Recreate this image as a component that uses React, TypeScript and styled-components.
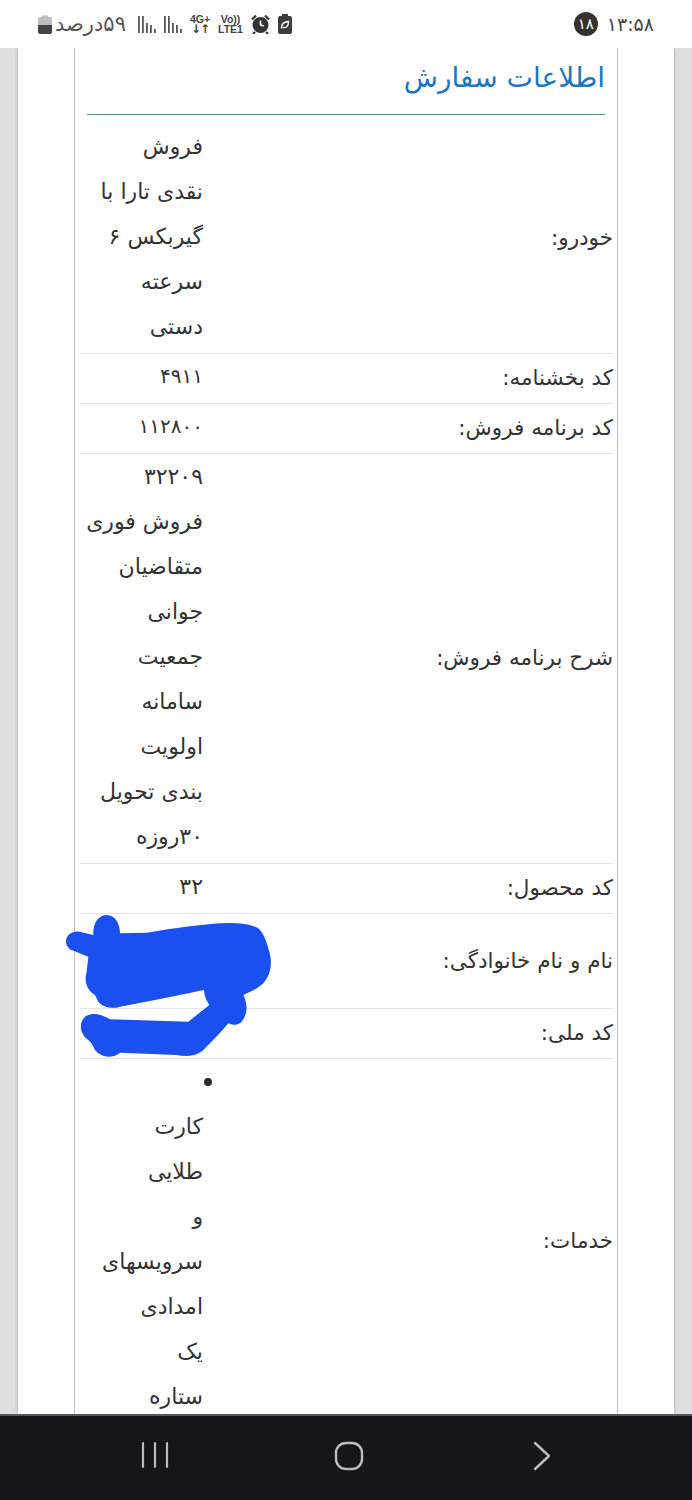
import React from "react";
import styled, { createGlobalStyle } from "styled-components";

const Global = createGlobalStyle`
  html, body { margin: 0; padding: 0; background: #fff; }
  * { box-sizing: border-box; }
`;

const Screen = styled.div`
  position: relative;
  width: 692px;
  height: 1500px;
  display: flex;
  flex-direction: column;
  overflow: hidden;
  font-family: "DejaVu Sans", "Noto Sans", sans-serif;
  color: #333;
`;

const StatusBar = styled.header`
  height: 48px;
  flex: none;
  background: #fff;
  display: flex;
  align-items: center;
  justify-content: space-between;
  padding: 0 38px;
  color: #4a4a4a;
`;

const StatusGroup = styled.div<{ $gap: number }>`
  display: flex;
  align-items: center;
  gap: ${(p) => p.$gap}px;
`;

const BatteryText = styled.span`
  font-size: 21px;
  line-height: 20px;
  color: #555;
  margin-left: 3px;
  margin-right: 12px;
`;

const ClockText = styled.span`
  font-size: 19px;
  line-height: 20px;
  color: #444;
`;

const Badge = styled.span`
  width: 24px;
  height: 24px;
  border-radius: 50%;
  background: #333;
  color: #fff;
  font-size: 15px;
  display: flex;
  align-items: center;
  justify-content: center;
`;

const NetStack = styled.span`
  display: flex;
  flex-direction: column;
  align-items: center;
  font-family: "Liberation Sans", sans-serif;
  font-weight: 700;
  font-size: 10.5px;
  line-height: 10px;
  color: #444;
`;

const NetArrows = styled.span`
  font-family: "DejaVu Sans", sans-serif;
  font-size: 12px;
  line-height: 10px;
  letter-spacing: -1px;
`;

const Viewport = styled.main`
  flex: 1;
  min-height: 0;
  overflow: hidden;
  padding: 0 18px;
  background: #dedede;
`;

const Sheet = styled.div`
  background: #fff;
  padding: 0 56px;
  box-shadow: 0 0 3px rgba(0, 0, 0, 0.3);
  height: 100%;
`;

const Card = styled.section`
  border-left: 1px solid #bdbdbd;
  border-right: 1px solid #bdbdbd;
  padding: 0 4px 0 5px;
  height: 100%;
`;

const HeadingBlock = styled.div`
  height: 67px;
  margin: 0 8px 0 7px;
  border-bottom: 1px solid #5b8a92;
  padding-top: 8px;
`;

const Heading = styled.h2`
  margin: 0;
  font-weight: 400;
  font-size: 28px;
  line-height: 44px;
  color: #1c76c4;
  text-align: right;
`;

const Rows = styled.div`
  margin-top: 9px;
`;

const Row = styled.div`
  display: grid;
  grid-template-columns: 1fr 125px;
  align-items: center;
  padding-bottom: 4px;
  & + & {
    border-top: 1px solid #e4e4e4;
  }
`;

const Label = styled.div`
  font-size: 21.5px;
  line-height: 30px;
  color: #333;
  white-space: nowrap;
  padding-top: 3px;
`;

const Value = styled.div`
  padding-right: 2px;
  text-align: right;
  font-size: 22px;
  color: #333;
`;

const Line = styled.div<{ $small?: boolean }>`
  height: 45px;
  line-height: 45px;
  white-space: nowrap;
  font-size: ${(p) => (p.$small ? "20px" : "inherit")};
`;

const BulletDot = styled.div`
  height: 45px;
  display: flex;
  align-items: center;
  justify-content: flex-start;
  margin-right: -9px;
  &::before {
    content: "";
    width: 8px;
    height: 8px;
    border-radius: 50%;
    background: #2b2b2b;
  }
`;

const NavBar = styled.nav`
  height: 86px;
  flex: none;
  background: #14161a;
  border-top: 2px solid #55575a;
  display: flex;
  align-items: flex-start;
  padding: 0 53px 0 58px;
  position: relative;
  z-index: 2;
`;

const NavSlot = styled.div`
  flex: 1;
  display: flex;
  justify-content: center;
  padding-top: 25px;
`;

const ScribbleLayer = styled.svg`
  position: absolute;
  left: 0;
  top: 900px;
  width: 350px;
  height: 200px;
`;

type RowData = { label: string; lines: string[]; bullet?: boolean; small?: boolean };

const rows: RowData[] = [
  { label: "خودرو:", lines: ["فروش", "نقدی تارا با", "گیربکس ۶", "سرعته", "دستی"] },
  { label: "کد بخشنامه:", lines: ["۴۹۱۱"], small: true },
  { label: "کد برنامه فروش:", lines: ["۱۱۲۸۰۰"], small: true },
  {
    label: "شرح برنامه فروش:",
    lines: ["۳۲۲۰۹", "فروش فوری", "متقاضیان", "جوانی", "جمعیت", "سامانه", "اولویت", "بندی تحویل", "۳۰روزه"],
  },
  { label: "کد محصول:", lines: ["۳۲"] },
  { label: "نام و نام خانوادگی:", lines: ["\u00a0", "\u00a0"] },
  { label: "کد ملی:", lines: ["\u00a0"] },
  {
    label: "خدمات:",
    bullet: true,
    lines: ["کارت", "طلایی", "و", "سرویسهای", "امدادی", "یک", "ستاره"],
  },
];

const BatteryIcon = () => (
  <svg width="14" height="19" viewBox="0 0 14 19">
    <path d="M4 0.5h6v1.5h2a2 2 0 0 1 2 2v6H0V4a2 2 0 0 1 2-2h2z" fill="#bdbdbd" />
    <path d="M0 10h14v7a2 2 0 0 1-2 2H2a2 2 0 0 1-2-2z" fill="#444" />
  </svg>
);

const Signal = () => (
  <svg width="18" height="17" viewBox="0 0 18 17" fill="#555">
    <rect x="0" y="0" width="1.8" height="17" />
    <rect x="4" y="0" width="1.8" height="17" />
    <rect x="8" y="7" width="1.8" height="10" />
    <rect x="12" y="9" width="1.8" height="8" />
    <rect x="16" y="13" width="1.8" height="4" />
  </svg>
);

const AlarmIcon = () => (
  <svg width="19" height="20" viewBox="0 0 19 20">
    <circle cx="9.5" cy="11" r="8" fill="#333" />
    <path d="M9.5 6.5V11l3.2 1" stroke="#fff" strokeWidth="1.6" fill="none" />
    <path d="M1 5.5 5 1.5M18 5.5 14 1.5M4 18l-2 2M15 18l2 2" stroke="#333" strokeWidth="2.2" fill="none" />
  </svg>
);

const LeafBattery = () => (
  <svg width="14" height="20" viewBox="0 0 14 20">
    <path d="M4 0h6v2h2a2 2 0 0 1 2 2v14a2 2 0 0 1-2 2H2a2 2 0 0 1-2-2V4a2 2 0 0 1 2-2h2z" fill="#3c3c3c" />
    <path d="M3.5 14.5C3.5 10 6 7.5 10.5 7.5c0 4.5-2 6.5-5.5 6" stroke="#fff" strokeWidth="1.4" fill="none" />
  </svg>
);

const Scribble = () => (
  <ScribbleLayer viewBox="0 0 1050 600" aria-hidden="true">
    <path
      fill="#1a4ff0"
      d="M198 125 C198 100 225 90 245 97 L280 105 C278 70 295 45 320 45 C345 45 360 70 360 100 L440 98 C500 88 560 78 640 71 C700 66 750 70 775 85 C795 105 800 130 808 155 C818 190 812 225 790 250 C770 268 750 275 730 285 C742 310 745 340 725 365 C710 378 695 375 685 370 C665 395 640 420 615 445 C595 468 565 472 530 465 L360 458 C340 475 305 475 285 450 C278 435 272 425 262 418 C240 400 235 370 255 350 C275 335 305 342 330 358 L565 365 L628 315 C618 300 612 285 612 270 C560 280 520 290 480 297 L360 320 C335 328 310 322 295 305 L285 285 C258 270 252 240 260 215 L265 170 L215 150 C205 145 198 135 198 125 Z"
    />
  </ScribbleLayer>
);

export default function App() {
  return (
    <Screen>
      <Global />
      <StatusBar>
        <StatusGroup $gap={0}>
          <BatteryIcon />
          <BatteryText dir="rtl">۵۹درصد</BatteryText>
          <StatusGroup $gap={8}>
            <Signal />
            <Signal />
            <NetStack>
              <span>4G+</span>
              <NetArrows>↓↑</NetArrows>
            </NetStack>
            <NetStack>
              <span>Vo))</span>
              <span>LTE1</span>
            </NetStack>
            <AlarmIcon />
            <LeafBattery />
          </StatusGroup>
        </StatusGroup>
        <StatusGroup $gap={9}>
          <Badge>۱۸</Badge>
          <ClockText>۱۳:۵۸</ClockText>
        </StatusGroup>
      </StatusBar>
      <Viewport>
        <Sheet>
          <Card dir="rtl">
            <HeadingBlock>
              <Heading>اطلاعات سفارش</Heading>
            </HeadingBlock>
            <Rows>
              {rows.map((r) => (
                <Row key={r.label}>
                  <Label>{r.label}</Label>
                  <Value>
                    {r.bullet && <BulletDot />}
                    {r.lines.map((l, i) => (
                      <Line key={i} $small={r.small}>
                        {l}
                      </Line>
                    ))}
                  </Value>
                </Row>
              ))}
            </Rows>
          </Card>
        </Sheet>
      </Viewport>
      <NavBar>
        <NavSlot>
          <svg width="28" height="28" viewBox="0 0 28 28" stroke="#b9bbbd" strokeWidth="2.2" strokeLinecap="round">
            <path d="M2 2v24M14 2v24M26 2v24" />
          </svg>
        </NavSlot>
        <NavSlot>
          <svg width="30" height="30" viewBox="0 0 30 30" fill="none" stroke="#b9bbbd" strokeWidth="2.4">
            <rect x="2" y="2" width="26" height="26" rx="10" />
          </svg>
        </NavSlot>
        <NavSlot>
          <svg width="20" height="30" viewBox="0 0 20 30" fill="none" stroke="#b9bbbd" strokeWidth="2.4" strokeLinecap="round" strokeLinejoin="round">
            <path d="M3 2l14 13L3 28" />
          </svg>
        </NavSlot>
      </NavBar>
      <Scribble />
    </Screen>
  );
}
